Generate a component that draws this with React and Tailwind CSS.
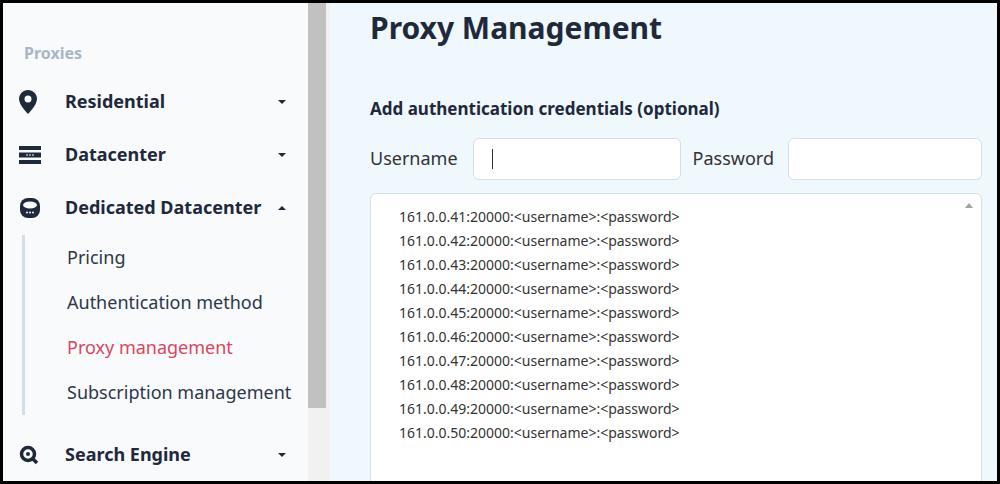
export default function App() {
  const ips = Array.from({ length: 10 }, (_, i) => `161.0.0.${41 + i}:20000:<username>:<password>`);
  const chev = <span className="w-0 h-0 border-l-[4px] border-r-[4px] border-t-[4px] border-l-transparent border-r-transparent border-t-[#1e293b]" />;
  const chevUp = <span className="w-0 h-0 border-l-[4px] border-r-[4px] border-b-[4px] border-l-transparent border-r-transparent border-b-[#1e293b]" />;
  const Item = ({ icon, label, up }) => (
    <div className="flex items-center h-[53px] pl-[16px] pr-[22px]">
      <div className="w-[46px] flex items-center">{icon}</div>
      <div className="flex-1 text-[18px] font-bold text-[#1e293b]">{label}</div>
      {up ? chevUp : chev}
    </div>
  );
  return (
    <div className="w-[1000px] h-[484px] border-[3px] border-black flex overflow-hidden font-['Liberation_Sans',Arial,sans-serif]">
      <div className="w-[305px] bg-[#f8fafc] flex flex-col shrink-0">
        <div className="h-[97px] pt-[38px] pl-[21px] text-[16px] font-bold text-[#a9b6c4]">Proxies</div>
        <div className="-mt-[7px]">
          <Item label="Residential" icon={<svg width="18" height="24" viewBox="0 0 18 24"><path d="M9 0C4 0 0 4 0 9c0 6 9 15 9 15s9-9 9-15c0-5-4-9-9-9z" fill="#1e293b"/><circle cx="9" cy="9" r="3.5" fill="#f8fafc"/></svg>} />
          <Item label="Datacenter" icon={<svg width="22" height="18" viewBox="0 0 22 18"><rect y="0" width="22" height="4" fill="#1e293b"/><rect y="6.5" width="22" height="5" fill="#1e293b"/><rect y="14" width="22" height="4" fill="#1e293b"/><g fill="#f8fafc"><rect x="7" y="8.5" width="2" height="1"/><rect x="10" y="8.5" width="2" height="1"/><rect x="13" y="8.5" width="2" height="1"/></g></svg>} />
          <Item up label="Dedicated Datacenter" icon={<svg width="22" height="22" viewBox="0 0 22 22"><rect x="1" y="1" width="20" height="20" rx="8" fill="#1e293b"/><ellipse cx="11" cy="8" rx="7" ry="3.5" fill="#f8fafc"/><g fill="#f8fafc"><circle cx="8" cy="15.5" r="1"/><circle cx="11" cy="15.5" r="1"/><circle cx="14" cy="15.5" r="1"/></g></svg>} />
        </div>
        <div className="ml-[19px] border-l-[3px] border-[#d5dde6] pl-[42px] flex flex-col text-[18px] text-[#2d3748] mt-[1px]">
          <div className="h-[45px] flex items-center">Pricing</div>
          <div className="h-[45px] flex items-center">Authentication method</div>
          <div className="h-[45px] flex items-center text-[#d9475c]">Proxy management</div>
          <div className="h-[45px] flex items-center">Subscription management</div>
        </div>
        <div className="mt-[13px]">
          <Item label="Search Engine" icon={<svg width="20" height="20" viewBox="0 0 20 20"><circle cx="9" cy="9" r="6.5" fill="none" stroke="#1e293b" strokeWidth="3.5"/><circle cx="9" cy="9" r="2" fill="#1e293b"/><path d="M13 13l5 5" stroke="#1e293b" strokeWidth="3.5"/></svg>} />
        </div>
      </div>
      <div className="w-[22px] bg-[#f1f1f1] shrink-0"><div className="w-[18px] h-[405px] bg-[#c1c1c1]"></div></div>
      <div className="flex-1 bg-[#eff8fd] pl-[40px] pr-[15px]">
        <div className="text-[30px] font-bold text-[#1e293b] pt-[5px] leading-[40px]">Proxy Management</div>
        <div className="mt-[48px] text-[17px] font-bold text-[#1e293b]">Add authentication credentials (optional)</div>
        <div className="mt-[16px] flex items-center text-[18px] text-[#333]">
          <span>Username</span>
          <div className="ml-[15px] w-[208px] h-[42px] bg-white border border-[#d6dee6] rounded-[6px] flex items-center pl-[18px]"><span className="w-[1px] h-[20px] bg-[#333]" /></div>
          <span className="ml-[12px]">Password</span>
          <div className="ml-[14px] flex-1 h-[42px] bg-white border border-[#d6dee6] rounded-[6px]"></div>
        </div>
        <div className="mt-[13px] h-[300px] bg-white border border-[#d6dee6] rounded-t-[6px] flex">
          <div className="flex-1 pl-[28px] pt-[11px] text-[14px] text-[#333] leading-[24px]">
            {ips.map((t) => <div key={t}>{t}</div>)}
          </div>
          <div className="w-[24px] flex justify-center pt-[9px]"><span className="w-0 h-0 border-l-[4px] border-r-[4px] border-b-[5px] border-l-transparent border-r-transparent border-b-[#a3a3a3]" /></div>
        </div>
      </div>
    </div>
  );
}
